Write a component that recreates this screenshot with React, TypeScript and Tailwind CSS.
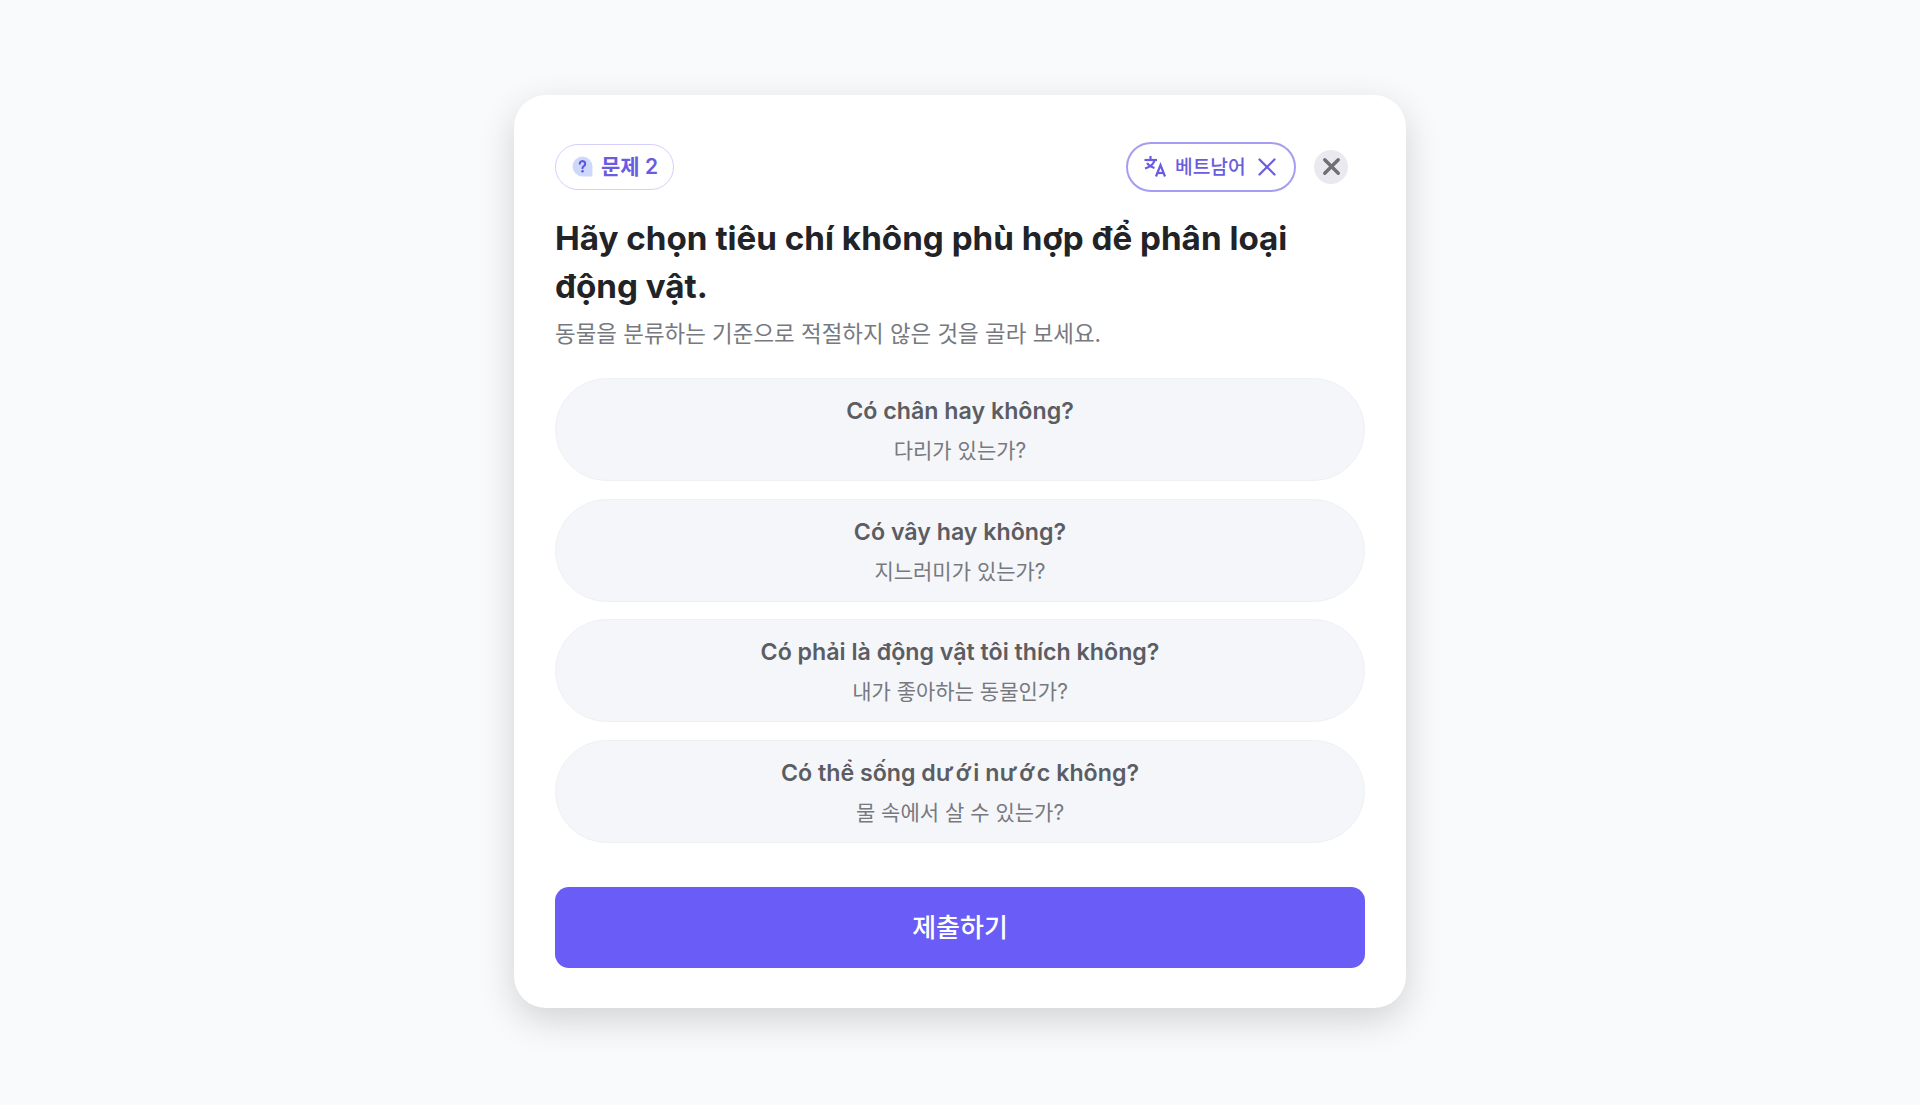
import { X } from "lucide-react";

function Horn({ children }: { children: string }) {
  return <span className="font-['Noto_Sans'] tracking-[2.7px]">{children}</span>;
}

const options = [
  { title: "Có chân hay không?", sub: "다리가 있는가?" },
  { title: "Có vây hay không?", sub: "지느러미가 있는가?" },
  { title: "Có phải là động vật tôi thích không?", sub: "내가 좋아하는 동물인가?" },
  {
    title: (
      <>
        Có thể sống d<Horn>ướ</Horn>i n<Horn>ướ</Horn>c không?
      </>
    ),
    sub: "물 속에서 살 수 있는가?",
  },
];

function QuestionBubble() {
  return (
    <svg width="23" height="23" viewBox="0 0 22 22" className="shrink-0">
      <path d="M11 1.5a9.5 9.5 0 1 0 0 19h9.5V11A9.5 9.5 0 0 0 11 1.5z" fill="#cdd9fb" />
      <path d="M8.4 8.4a2.6 2.6 0 1 1 3.9 2.3c-.8.5-1.3 1-1.3 1.9" fill="none" stroke="#5f55de" strokeWidth="2" strokeLinecap="round" />
      <circle cx="11" cy="15.6" r="1.2" fill="#5f55de" />
    </svg>
  );
}

function TranslateIcon() {
  return (
    <svg width="23" height="23" viewBox="0 0 23 23" fill="none" stroke="#6a5ce0" strokeWidth="2.2" className="shrink-0">
      <path d="M.5 5h12.5" />
      <path d="M6.5 1v4" />
      <path d="M10.5 5.5c-1 3.4-4.4 6.4-9.5 8" />
      <path d="M3 8c1.4 2.2 4 4 7.5 5" />
      <path d="M12 21.5 16.5 10l4.5 11.5" />
      <path d="M13.5 18h6" />
    </svg>
  );
}

export default function App() {
  return (
    <div className="min-h-screen bg-[#f8fafc] flex items-center justify-center font-['Inter','Noto_Sans_CJK_KR',sans-serif]">
      <div className="w-[892px] h-[913px] mb-[2px] bg-white rounded-[32px] shadow-[0_12px_36px_rgba(0,0,0,0.16)] pt-[46.5px] px-[41px] pb-[40px] flex flex-col">
        <div className="flex items-center justify-between h-[50px] pr-[17px]">
          <div className="h-[46px] w-[119px] rounded-full border-[1.5px] border-[#d5cffa] flex items-center justify-center gap-[7px] text-[#6a5ce0] text-[21px] font-semibold">
            <QuestionBubble />
            <span>문제 2</span>
          </div>
          <div className="flex items-center gap-[18px]">
            <div className="h-[50px] w-[170px] rounded-full border-2 border-[#a59df0] flex items-center pl-[16px] text-[#6a5ce0] text-[19.2px] font-medium">
              <TranslateIcon />
              <span className="ml-[8px] pt-[1px]">베트남어</span>
              <X size={30} strokeWidth={1.8} className="ml-[6px] shrink-0" />
            </div>
            <button className="w-[34px] h-[34px] rounded-full bg-[#e9e9ef] flex items-center justify-center text-[#6f6f76]">
              <X size={27} strokeWidth={3} className="shrink-0" />
            </button>
          </div>
        </div>
        <h1 className="mt-[22.5px] text-[33.2px] leading-[48px] font-bold text-[#222327]">
          Hãy chọn tiêu chí không phù hợp để phân loại động vật.
        </h1>
        <p className="mt-[8px] text-[22.45px] leading-[32px] text-[#77797f]">동물을 분류하는 기준으로 적절하지 않은 것을 골라 보세요.</p>
        <div className="mt-[28px] flex flex-col gap-[17.5px]">
          {options.map((o) => (
            <div key={o.sub} className="h-[103px] rounded-full bg-[#f4f6f9] border border-[#eef1f4] pt-[2.8px] flex flex-col items-center justify-center gap-[9.2px]">
              <div className="text-[23.2px] leading-[32px] font-semibold text-[#5c5d63]">{o.title}</div>
              <div className="text-[21px] leading-[30px] text-[#77797f]">{o.sub}</div>
            </div>
          ))}
        </div>
        <button className="mt-[44px] h-[82px] rounded-[14px] bg-[#6a5cf6] text-white text-[26px] font-medium">제출하기</button>
      </div>
    </div>
  );
}
